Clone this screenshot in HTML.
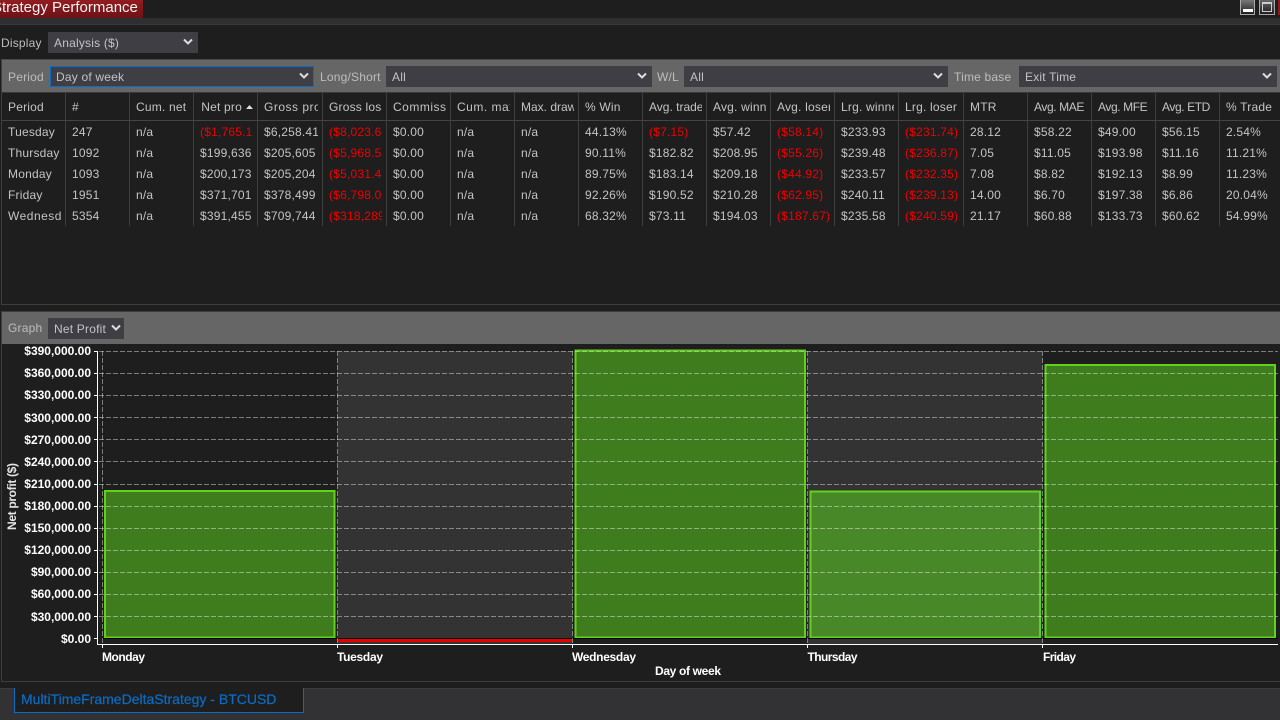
<!DOCTYPE html>
<html>
<head>
<meta charset="utf-8">
<title>Strategy Performance</title>
<style>
html,body{margin:0;padding:0;width:1280px;height:720px;overflow:hidden;background:#1e1e1e;}
body{position:relative;font-family:"Liberation Sans",Arial,sans-serif;font-size:12px;color:#c0c0c0;letter-spacing:.2px;}
.a{position:absolute;}
.lbl{position:absolute;color:#bdbdbd;line-height:14px;white-space:nowrap;}
.sel{position:absolute;background:#3e3e44;color:#c4c4c4;height:21px;line-height:22px;box-sizing:border-box;padding-left:6px;white-space:nowrap;}
.sel svg{position:absolute;right:5px;top:6px;}
table{position:absolute;left:2px;top:93px;border-collapse:separate;border-spacing:0;table-layout:fixed;width:1278px;}
th,td{padding:0;font-weight:normal;text-align:left;border-right:1px solid #3e3e3e;color:#c4c4c4;}
th{height:27px;border-bottom:1px solid #444;}
td{height:21px;}
th p,td p{margin:0;padding:0;margin-left:6px;margin-right:4px;overflow:hidden;white-space:nowrap;line-height:14px;}
.r{color:#ee0000;}
.n{letter-spacing:-.4px;}
.w{letter-spacing:.5px;}
.z{letter-spacing:0;}
svg text{letter-spacing:0;}
</style>
</head>
<body>
<!-- title -->
<div class="a" style="left:0;top:0;width:143px;height:18px;background:linear-gradient(#921c20,#6c1216);"></div>
<div class="a" style="left:-8px;top:-1px;font-size:15px;line-height:18px;color:#f2f2f2;white-space:nowrap;letter-spacing:0;">Strategy Performance</div>
<div class="a" style="left:0;top:18px;width:1280px;height:7px;background:#2f2f31;border-bottom:1px solid #3a3a3a;box-sizing:border-box;"></div>
<!-- window buttons -->
<div class="a" style="left:1240px;top:0;width:15px;height:15px;box-sizing:border-box;border:1px solid #aaa;border-top:none;background:linear-gradient(#777,#1e1e1e);"></div>
<div class="a" style="left:1243px;top:9px;width:10px;height:3px;background:#fff;"></div>
<div class="a" style="left:1259px;top:0;width:16px;height:15px;box-sizing:border-box;border:1px solid #aaa;border-top:none;background:linear-gradient(#666,#1e1e1e);"></div>
<div class="a" style="left:1262px;top:2px;width:10px;height:10px;box-sizing:border-box;border:1px solid #ccc;border-top-width:2px;"></div>
<div class="a" style="left:1278px;top:0;width:2px;height:15px;background:#8c1a1f;"></div>

<!-- display -->
<div class="lbl" style="left:1px;top:36px;">Display</div>
<div class="sel" style="left:48px;top:32px;width:150px;">Analysis ($)<svg width="10" height="8" viewBox="0 0 10 8"><path d="M1 1.500L5 5.500L9 1.500" fill="none" stroke="#ddd" stroke-width="2"/></svg></div>

<!-- top panel -->
<div class="a" style="left:1px;top:59px;width:1279px;height:246px;box-sizing:border-box;border:1px solid #3e3e3e;border-right:none;"></div>
<div class="a" style="left:2px;top:60px;width:1278px;height:32px;background:#666;"></div>
<div class="a" style="left:1px;top:59px;width:1279px;height:1px;background:#4a4a4a;"></div>
<div class="a" style="left:2px;top:92px;width:1278px;height:1px;background:#3a3a3a;"></div>
<div class="lbl" style="left:8px;top:70px;">Period</div>
<div class="sel" style="left:50px;top:66px;width:264px;border:1px solid #0a6cc4;line-height:20px;padding-left:5px;">Day of week<svg style="right:4px;top:5px;" width="10" height="8" viewBox="0 0 10 8"><path d="M1 1.500L5 5.500L9 1.500" fill="none" stroke="#ddd" stroke-width="2"/></svg></div>
<div class="lbl" style="left:320px;top:70px;">Long/Short</div>
<div class="sel" style="left:386px;top:66px;width:266px;">All<svg width="10" height="8" viewBox="0 0 10 8"><path d="M1 1.500L5 5.500L9 1.500" fill="none" stroke="#ddd" stroke-width="2"/></svg></div>
<div class="lbl" style="left:657px;top:70px;">W/L</div>
<div class="sel" style="left:684px;top:66px;width:264px;">All<svg width="10" height="8" viewBox="0 0 10 8"><path d="M1 1.500L5 5.500L9 1.500" fill="none" stroke="#ddd" stroke-width="2"/></svg></div>
<div class="lbl" style="left:954px;top:70px;">Time base</div>
<div class="sel" style="left:1019px;top:66px;width:258px;">Exit Time<svg width="10" height="8" viewBox="0 0 10 8"><path d="M1 1.500L5 5.500L9 1.500" fill="none" stroke="#ddd" stroke-width="2"/></svg></div>

<!-- table -->
<table>
<colgroup>
<col style="width:64px"><col style="width:64px"><col style="width:64px"><col style="width:64px"><col style="width:65px"><col style="width:64px"><col style="width:64px"><col style="width:64px"><col style="width:64px"><col style="width:64px"><col style="width:64px"><col style="width:64px"><col style="width:64px"><col style="width:64px"><col style="width:65px"><col style="width:64px"><col style="width:64px"><col style="width:64px"><col style="width:64px"><col style="width:60px">
</colgroup>
<tr><th><p>Period</p></th><th><p>#</p></th><th><p>Cum. net</p></th><th><p>&#8202;Net pro<svg style="margin-left:4px;vertical-align:2px" width="7" height="4" viewBox="0 0 7 4"><path d="M0 4L3.500 0L7 4Z" fill="#ddd"/></svg></p></th><th><p class="w">Gross profit</p></th><th><p>Gross loss</p></th><th><p class="w">Commission</p></th><th><p class="w">Cum. max</p></th><th><p class="z">Max. drawdown</p></th><th><p>% Win</p></th><th><p class="z">Avg. trade</p></th><th><p>Avg. winner</p></th><th><p>Avg. loser</p></th><th><p>Lrg. winner</p></th><th><p>Lrg. loser</p></th><th><p>MTR</p></th><th><p class="n">Avg. MAE</p></th><th><p class="n">Avg. MFE</p></th><th><p class="n">Avg. ETD</p></th><th style="border-right:none"><p>% Trade</p></th></tr>
<tr><td><p>Tuesday</p></td><td><p>247</p></td><td><p>n/a</p></td><td><p class="r">($1,765.15)</p></td><td><p>$6,258.41</p></td><td><p class="r">($8,023.61)</p></td><td><p>$0.00</p></td><td><p>n/a</p></td><td><p>n/a</p></td><td><p>44.13%</p></td><td><p class="r">($7.15)</p></td><td><p>$57.42</p></td><td><p class="r">($58.14)</p></td><td><p>$233.93</p></td><td><p class="r">($231.74)</p></td><td><p>28.12</p></td><td><p>$58.22</p></td><td><p>$49.00</p></td><td><p>$56.15</p></td><td style="border-right:none"><p>2.54%</p></td></tr>
<tr><td><p>Thursday</p></td><td><p>1092</p></td><td><p>n/a</p></td><td><p>$199,636</p></td><td><p>$205,605</p></td><td><p class="r">($5,968.52)</p></td><td><p>$0.00</p></td><td><p>n/a</p></td><td><p>n/a</p></td><td><p>90.11%</p></td><td><p>$182.82</p></td><td><p>$208.95</p></td><td><p class="r">($55.26)</p></td><td><p>$239.48</p></td><td><p class="r">($236.87)</p></td><td><p>7.05</p></td><td><p>$11.05</p></td><td><p>$193.98</p></td><td><p>$11.16</p></td><td style="border-right:none"><p>11.21%</p></td></tr>
<tr><td><p>Monday</p></td><td><p>1093</p></td><td><p>n/a</p></td><td><p>$200,173</p></td><td><p>$205,204</p></td><td><p class="r">($5,031.43)</p></td><td><p>$0.00</p></td><td><p>n/a</p></td><td><p>n/a</p></td><td><p>89.75%</p></td><td><p>$183.14</p></td><td><p>$209.18</p></td><td><p class="r">($44.92)</p></td><td><p>$233.57</p></td><td><p class="r">($232.35)</p></td><td><p>7.08</p></td><td><p>$8.82</p></td><td><p>$192.13</p></td><td><p>$8.99</p></td><td style="border-right:none"><p>11.23%</p></td></tr>
<tr><td><p>Friday</p></td><td><p>1951</p></td><td><p>n/a</p></td><td><p>$371,701</p></td><td><p>$378,499</p></td><td><p class="r">($6,798.01)</p></td><td><p>$0.00</p></td><td><p>n/a</p></td><td><p>n/a</p></td><td><p>92.26%</p></td><td><p>$190.52</p></td><td><p>$210.28</p></td><td><p class="r">($62.95)</p></td><td><p>$240.11</p></td><td><p class="r">($239.13)</p></td><td><p>14.00</p></td><td><p>$6.70</p></td><td><p>$197.38</p></td><td><p>$6.86</p></td><td style="border-right:none"><p>20.04%</p></td></tr>
<tr><td><p class="w">Wednesday</p></td><td><p>5354</p></td><td><p>n/a</p></td><td><p>$391,455</p></td><td><p>$709,744</p></td><td><p class="r">($318,289)</p></td><td><p>$0.00</p></td><td><p>n/a</p></td><td><p>n/a</p></td><td><p>68.32%</p></td><td><p>$73.11</p></td><td><p>$194.03</p></td><td><p class="r">($187.67)</p></td><td><p>$235.58</p></td><td><p class="r">($240.59)</p></td><td><p>21.17</p></td><td><p>$60.88</p></td><td><p>$133.73</p></td><td><p>$60.62</p></td><td style="border-right:none"><p>54.99%</p></td></tr>
</table>

<!-- graph panel -->
<div class="a" style="left:1px;top:311px;width:1279px;height:371px;box-sizing:border-box;border:1px solid #3e3e3e;border-right:none;"></div>
<div class="a" style="left:2px;top:312px;width:1278px;height:32px;background:#666;"></div>
<div class="lbl" style="left:8px;top:321px;">Graph</div>
<div class="sel" style="left:48px;top:318px;width:76px;">Net Profit<svg style="right:3px;" width="10" height="8" viewBox="0 0 10 8"><path d="M1 1.500L5 5.500L9 1.500" fill="none" stroke="#ddd" stroke-width="2"/></svg></div>

<!-- chart -->
<svg class="a" style="left:0;top:344px;" width="1280" height="340" viewBox="0 344 1280 340" font-family="'Liberation Sans',Arial,sans-serif">
<rect x="337.500" y="351" width="235" height="293" fill="#333"/>
<rect x="807.500" y="351" width="235" height="293" fill="#333"/>
<!-- bars -->
<rect x="105" y="491" width="229.500" height="146.500" fill="#3f7c1e" stroke="#5fd31a" stroke-width="2"/>
<rect x="575.500" y="350.500" width="229.500" height="287" fill="#3f7c1e" stroke="#5fd31a" stroke-width="2"/>
<rect x="810.500" y="491.500" width="229.500" height="146" fill="#498828" stroke="#5fd31a" stroke-width="2"/>
<rect x="1045.500" y="365" width="229.500" height="272.500" fill="#3f7c1e" stroke="#5fd31a" stroke-width="2"/>
<rect x="338" y="639" width="234" height="3" fill="#e80000"/>
<rect x="102" y="638" width="1176" height="1" fill="#000"/>
<!-- grid -->
<g stroke="#fff" stroke-opacity=".42" stroke-width="1" stroke-dasharray="5 2" fill="none">
<path d="M99 351.500H1278M99 373.500H1278M99 395.500H1278M99 417.500H1278M99 439.500H1278M99 461.500H1278M99 484.500H1278M99 506.500H1278M99 528.500H1278M99 550.500H1278M99 572.500H1278M99 594.500H1278M99 616.500H1278"/>
<path d="M102.500 351V644M337.500 351V644M572.500 351V644M807.500 351V644M1042.500 351V644"/>
</g>
<!-- axes -->
<path d="M97.500 351V644.500H1278" stroke="#fff" fill="none"/>
<g stroke="#fff">
<path d="M94 351.500H97M94 373.500H97M94 395.500H97M94 417.500H97M94 439.500H97M94 461.500H97M94 484.500H97M94 506.500H97M94 528.500H97M94 550.500H97M94 572.500H97M94 594.500H97M94 616.500H97M94 638.500H97"/>
<path d="M102.500 645V648M337.500 645V648M572.500 645V648M807.500 645V648M1042.500 645V648"/>
</g>
<g fill="#fff" font-size="12" font-weight="bold" text-anchor="end">
<text x="91" y="355">$390,000.00</text>
<text x="91" y="377">$360,000.00</text>
<text x="91" y="399">$330,000.00</text>
<text x="91" y="422">$300,000.00</text>
<text x="91" y="444">$270,000.00</text>
<text x="91" y="466">$240,000.00</text>
<text x="91" y="488">$210,000.00</text>
<text x="91" y="510">$180,000.00</text>
<text x="91" y="532">$150,000.00</text>
<text x="91" y="554">$120,000.00</text>
<text x="91" y="576">$90,000.00</text>
<text x="91" y="598">$60,000.00</text>
<text x="91" y="621">$30,000.00</text>
<text x="91" y="643">$0.00</text>
</g>
<g fill="#fff" font-size="12" font-weight="bold">
<text x="102" y="661" textLength="43">Monday</text>
<text x="337" y="661" textLength="46">Tuesday</text>
<text x="572" y="661" textLength="64">Wednesday</text>
<text x="807.500" y="661" textLength="50">Thursday</text>
<text x="1043" y="661" textLength="33">Friday</text>
<text x="655" y="675" textLength="66">Day of week</text>
<text transform="translate(16,530) rotate(-90)" textLength="67" fill="#e4e4e4">Net profit ($)</text>
</g>
</svg>

<!-- bottom -->
<div class="a" style="left:0;top:688px;width:1280px;height:32px;background:#323235;border-top:1px solid #3c3c3c;box-sizing:border-box;"></div>
<div class="a" style="left:14px;top:688px;width:290px;height:25px;box-sizing:border-box;background:#1e1e1e;border:1px solid #0a6cc4;border-top:none;"></div>
<div class="a" style="left:21px;top:691px;font-size:14px;line-height:16px;color:#0a6cc4;white-space:nowrap;letter-spacing:0;-webkit-text-stroke:.2px #0a6cc4;">MultiTimeFrameDeltaStrategy - BTCUSD</div>
</body>
</html>
